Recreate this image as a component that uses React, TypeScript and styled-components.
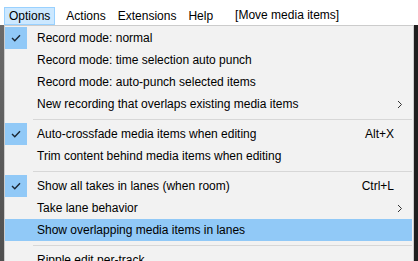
import React from "react";
import styled, { createGlobalStyle } from "styled-components";

const Global = createGlobalStyle`
  html, body {
    margin: 0;
    padding: 0;
    background: #ffffff;
    overflow: hidden;
  }
  body {
    font-family: "Segoe UI", "Liberation Sans", Arial, sans-serif;
    font-size: 12px;
    color: #000;
  }
`;

const Screen = styled.div`
  width: 418px;
  height: 261px;
  display: flex;
  flex-direction: column;
  overflow: hidden;
`;

const MenuBar = styled.div`
  height: 25px;
  flex: none;
  background: #fff;
  display: flex;
  align-items: flex-end;
  padding-left: 4px;
`;

const MenuTitle = styled.div<{ $open?: boolean }>`
  height: 18px;
  box-sizing: border-box;
  padding: 0 ${(p) => (p.$open ? "4px" : "5px")};
  line-height: 16px;
  border: 1px solid ${(p) => (p.$open ? "#99d1ff" : "transparent")};
  background: ${(p) => (p.$open ? "#cce8ff" : "transparent")};
  margin-right: ${(p) => (p.$open ? "5px" : "0")};
  white-space: nowrap;
`;

const Status = styled.div`
  margin-left: 16px;
  height: 18px;
  line-height: 16px;
  white-space: nowrap;
`;

const Body = styled.div`
  flex: 1;
  display: flex;
`;

const LeftStrip = styled.div`
  width: 4px;
  background: linear-gradient(#6b6b6b, #4e4e4e);
`;

const RightStrip = styled.div`
  flex: 1;
  background: #1f1f1f;
`;

const Dropdown = styled.div`
  width: 410px;
  box-sizing: border-box;
  background: #f2f2f2;
  border: 1px solid #cccccc;
  border-bottom: none;
  padding: 1px 1px 0 0;
`;

const Row = styled.div<{ $hot?: boolean }>`
  height: 22px;
  display: flex;
  align-items: center;
  background: ${(p) => (p.$hot ? "#91c9f7" : "transparent")};
  white-space: nowrap;
`;

const CheckCell = styled.div<{ $on?: boolean }>`
  width: 22px;
  height: 22px;
  margin-right: 10px;
  display: flex;
  align-items: center;
  justify-content: center;
  background: ${(p) => (p.$on ? "#91c9f7" : "transparent")};
`;

const Label = styled.div`
  flex: 1;
`;

const Shortcut = styled.div`
  text-align: right;
`;

const ArrowCell = styled.div`
  width: 18px;
  height: 22px;
  display: flex;
  align-items: center;
  padding-left: 3px;
  box-sizing: border-box;
`;

const Separator = styled.div`
  height: 8px;
  display: flex;
  align-items: center;
  padding-left: 28px;
  &::after {
    content: "";
    flex: 1;
    height: 1px;
    background: #d7d7d7;
  }
`;

const Check = () => (
  <svg width="10" height="8" viewBox="0 0 10 8">
    <path d="M1 4 L3.8 6.8 L9 1.2" fill="none" stroke="#1b2733" strokeWidth="1.4" />
  </svg>
);

const Chevron = () => (
  <svg width="6" height="9" viewBox="0 0 6 9">
    <path d="M1 1 L4.5 4.5 L1 8" fill="none" stroke="#333" strokeWidth="1" />
  </svg>
);

type Item =
  | { sep: true }
  | { label: string; checked?: boolean; shortcut?: string; sub?: boolean; hot?: boolean };

const items: Item[] = [
  { label: "Record mode: normal", checked: true },
  { label: "Record mode: time selection auto punch" },
  { label: "Record mode: auto-punch selected items" },
  { label: "New recording that overlaps existing media items", sub: true },
  { sep: true },
  { label: "Auto-crossfade media items when editing", checked: true, shortcut: "Alt+X" },
  { label: "Trim content behind media items when editing" },
  { sep: true },
  { label: "Show all takes in lanes (when room)", checked: true, shortcut: "Ctrl+L" },
  { label: "Take lane behavior", sub: true },
  { label: "Show overlapping media items in lanes", hot: true },
  { sep: true },
  { label: "Ripple edit per-track" },
];

export default function App() {
  return (
    <Screen>
      <Global />
      <MenuBar>
        <MenuTitle $open>Options</MenuTitle>
        <MenuTitle>Actions</MenuTitle>
        <MenuTitle>Extensions</MenuTitle>
        <MenuTitle>Help</MenuTitle>
        <Status>[Move media items]</Status>
      </MenuBar>
      <Body>
        <LeftStrip />
        <Dropdown>
          {items.map((it, i) =>
            "sep" in it ? (
              <Separator key={i} />
            ) : (
              <Row key={i} $hot={it.hot}>
                <CheckCell $on={it.checked}>{it.checked && <Check />}</CheckCell>
                <Label>{it.label}</Label>
                <Shortcut>{it.shortcut}</Shortcut>
                <ArrowCell>{it.sub && <Chevron />}</ArrowCell>
              </Row>
            )
          )}
        </Dropdown>
        <RightStrip />
      </Body>
    </Screen>
  );
}
